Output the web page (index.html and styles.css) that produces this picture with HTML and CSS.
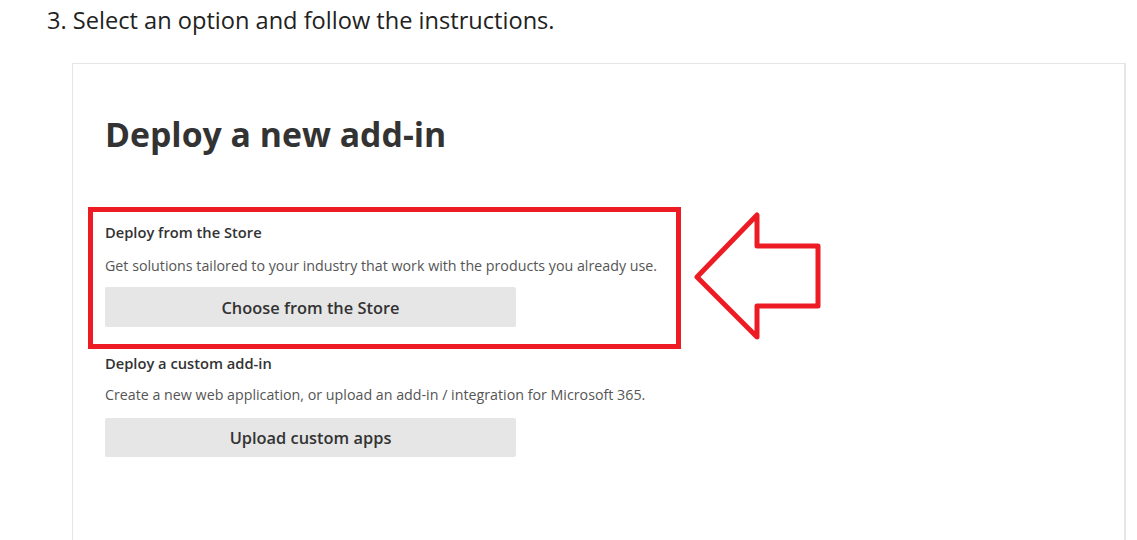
FILE: index.html
```html
<!DOCTYPE html>
<html lang="en">
<head>
    <meta charset="UTF-8">
    <meta name="viewport" content="width=device-width, initial-scale=1.0">
    <title>Deploy a new add-in</title>
    <link rel="stylesheet" href="styles.css">
</head>
<body>
    <p class="step">3. Select an option and follow the instructions.</p>

    <div class="shot">
        <div class="card">
            <h1>Deploy a new add-in</h1>

            <div class="option highlight">
                <h2>Deploy from the Store</h2>
                <p>Get solutions tailored to your industry that work with the products you already use.</p>
                <button class="btn">Choose from the Store</button>
            </div>

            <div class="option custom">
                <h2>Deploy a custom add-in</h2>
                <p>Create a new web application, or upload an add-in / integration for Microsoft 365.</p>
                <button class="btn">Upload custom apps</button>
            </div>
        </div>

        <!-- annotation arrow pointing at the store option -->
        <svg class="arrow" width="140" height="140" viewBox="0 0 140 140">
            <polygon points="7,70 67,8 67,39 128,39 128,99 67,99 67,130"
                     fill="#fff" stroke="#ed1c24" stroke-width="5" stroke-linejoin="round"/>
        </svg>
    </div>
</body>
</html>
```

FILE: styles.css
```css
body {
    font-family: "Open Sans", "Noto Sans", sans-serif;
    margin: 0;
    padding: 0;
    background-color: #fff;
    overflow: hidden;
}
.step {
    margin: 0;
    padding: 5px 0 0 47px;
    font-size: 23.6px;
    line-height: 30px;
    color: #222;
}
.shot {
    position: relative;
    margin: 28px 0 0 72px;
    height: 477px;
    overflow: hidden;
}
.card {
    width: 1054px;
    min-height: 520px;
    border: 1px solid #e6e6e6;
    border-right-width: 2px;
    border-bottom: none;
    padding: 48px 0 0 32px;
    box-sizing: border-box;
    background-color: #fff;
}
h1 {
    margin: 0 0 51px 0;
    font-size: 33.8px;
    line-height: 44px;
    font-weight: 700;
    color: #333;
}
.option h2 {
    margin: 0;
    font-size: 14.7px;
    line-height: 20px;
    font-weight: 600;
    color: #333;
}
.option p {
    margin: 14px 0 0 0;
    font-size: 14.25px;
    line-height: 20px;
    color: #555;
}
.btn {
    display: block;
    width: 411px;
    height: 40px;
    margin-top: 11px;
    border: none;
    border-radius: 2px;
    background-color: #e6e6e6;
    font-family: inherit;
    font-size: 16.4px;
    font-weight: 600;
    color: #333;
}
.highlight {
    width: 593px;
    margin-left: -17px;
    padding: 10px 0 17px 12px;
    border: 5px solid #ed1c24;
    box-sizing: border-box;
}
.custom {
    margin-top: 4px;
}
.custom p {
    margin-top: 12px;
}
.custom .btn {
    margin-top: 13px;
    height: 39px;
}
.arrow {
    position: absolute;
    left: 618px;
    top: 144px;
}
```
